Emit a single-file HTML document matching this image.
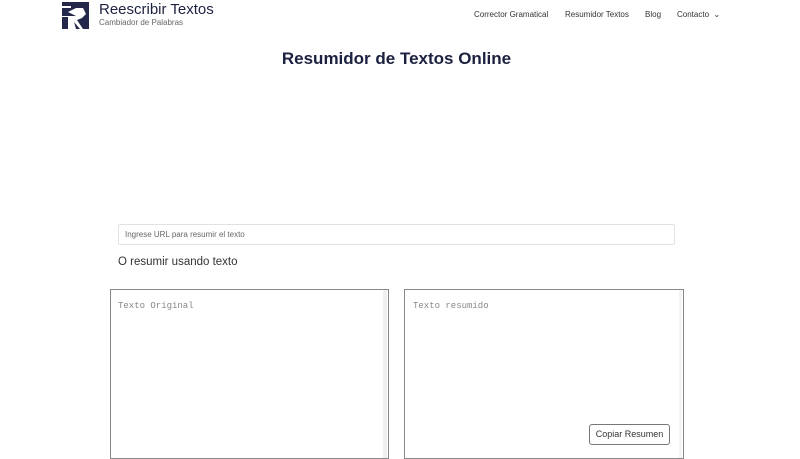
<!DOCTYPE html>
<html><head><meta charset="utf-8"><style>
*{box-sizing:border-box;margin:0;padding:0}
body{width:800px;height:449px;overflow:hidden;background:#fff;font-family:"Liberation Sans",sans-serif;color:#222;position:relative}
.a{position:absolute}
.nav{font-size:8px;color:#333;top:10px}
</style></head><body>
<svg class="a" style="left:62px;top:2px" width="27" height="27" viewBox="0 0 27 27">
<path d="M0 0H27V27H21L15 18L20 16L24 12L21 6H9V4H0Z" fill="#23284a"/>
<path d="M0 6H14L6 10L14 14H0Z" fill="#23284a"/>
<path d="M0 15H6V27H0Z" fill="#23284a"/>
<path d="M12 20L18 27H14Z" fill="#23284a"/>
</svg>
<div class="a" style="left:99px;top:1px;font-size:15px;color:#1c2140">Reescribir Textos</div>
<div class="a" style="left:99px;top:18px;font-size:8px;color:#666">Cambiador de Palabras</div>
<div class="a nav" style="left:474px">Corrector Gramatical</div>
<div class="a nav" style="left:565px">Resumidor Textos</div>
<div class="a nav" style="left:645px">Blog</div>
<div class="a nav" style="left:677px">Contacto &nbsp;⌄</div>
<div class="a" style="left:0;width:793px;top:49px;text-align:center;font-size:17px;font-weight:600;color:#1c2140">Resumidor de Textos Online</div>
<div class="a" style="left:118px;top:224px;width:557px;height:21px;border:1px solid #e2e2e2;border-radius:2px;font-size:8px;color:#666;padding:5px 6px">Ingrese URL para resumir el texto</div>
<div class="a" style="left:118px;top:256px;font-size:11.5px;color:#333">O resumir usando texto</div>
<div class="a" style="left:110px;top:289px;width:279px;height:170px;border:1px solid #888;padding:11px 7px;font-family:'Liberation Mono',monospace;font-size:9px;color:#888">Texto Original<div class="a" style="right:1px;top:0;width:4px;height:100%;background:#f0f0f0"></div></div>
<div class="a" style="left:404px;top:289px;width:280px;height:170px;border:1px solid #888;padding:11px 8px;font-family:'Liberation Mono',monospace;font-size:9px;color:#888">Texto resumido<div class="a" style="right:1px;top:0;width:3px;height:100%;background:#f4f4f4"></div></div>
<div class="a" style="left:589px;top:424px;width:81px;height:21px;border:1px solid #777;border-radius:3px;font-size:9px;color:#333;text-align:center;line-height:19px">Copiar Resumen</div>
</body></html>
